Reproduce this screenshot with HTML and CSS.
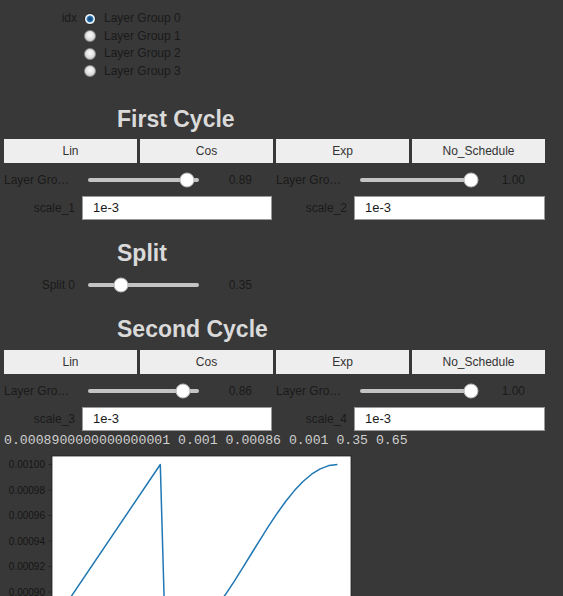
FILE: index.html
```html
<!DOCTYPE html>
<html>
<head>
<meta charset="utf-8">
<link rel="stylesheet" href="styles.css">
</head>
<body>
<div class="page">
  <div class="radio-widget">
    <div class="desc">idx</div>
    <div class="options">
      <div class="opt"><span class="radio checked"></span><span>Layer Group 0</span></div>
      <div class="opt"><span class="radio"></span><span>Layer Group 1</span></div>
      <div class="opt"><span class="radio"></span><span>Layer Group 2</span></div>
      <div class="opt"><span class="radio"></span><span>Layer Group 3</span></div>
    </div>
  </div>

  <h2 class="heading heading-first">First Cycle</h2>
  <div class="buttons">
    <button class="btn">Lin</button>
    <button class="btn">Cos</button>
    <button class="btn">Exp</button>
    <button class="btn">No_Schedule</button>
  </div>
  <div class="cols">
    <div class="slider">
      <div class="label">Layer Group 0</div>
      <div class="track"><span class="thumb" style="left:99px"></span></div>
      <div class="readout">0.89</div>
    </div>
    <div class="slider">
      <div class="label">Layer Group 1</div>
      <div class="track"><span class="thumb" style="left:111px"></span></div>
      <div class="readout">1.00</div>
    </div>
    <div class="textrow">
      <div class="label">scale_1</div>
      <input class="input" type="text" value="1e-3">
    </div>
    <div class="textrow">
      <div class="label">scale_2</div>
      <input class="input" type="text" value="1e-3">
    </div>
  </div>

  <h2 class="heading heading-split">Split</h2>
  <div class="cols">
    <div class="slider slider-split">
      <div class="label">Split 0</div>
      <div class="track"><span class="thumb" style="left:33px"></span></div>
      <div class="readout">0.35</div>
    </div>
  </div>

  <h2 class="heading heading-second">Second Cycle</h2>
  <div class="buttons">
    <button class="btn">Lin</button>
    <button class="btn">Cos</button>
    <button class="btn">Exp</button>
    <button class="btn">No_Schedule</button>
  </div>
  <div class="cols">
    <div class="slider">
      <div class="label">Layer Group 0</div>
      <div class="track"><span class="thumb" style="left:95px"></span></div>
      <div class="readout">0.86</div>
    </div>
    <div class="slider">
      <div class="label">Layer Group 1</div>
      <div class="track"><span class="thumb" style="left:111px"></span></div>
      <div class="readout">1.00</div>
    </div>
    <div class="textrow">
      <div class="label">scale_3</div>
      <input class="input" type="text" value="1e-3">
    </div>
    <div class="textrow">
      <div class="label">scale_4</div>
      <input class="input" type="text" value="1e-3">
    </div>
  </div>

  <pre class="output">0.0008900000000000001 0.001 0.00086 0.001 0.35 0.65</pre>

  <svg class="chart" width="384" height="148" viewBox="0 0 384 148">
    <rect x="48" y="8" width="299" height="196" fill="#ffffff" stroke="#222" stroke-width="0.8"/>
    <g stroke="#222" stroke-width="0.8">
      <line x1="44.5" y1="16.5" x2="48" y2="16.5"/>
      <line x1="44.5" y1="42" x2="48" y2="42"/>
      <line x1="44.5" y1="67.5" x2="48" y2="67.5"/>
      <line x1="44.5" y1="93" x2="48" y2="93"/>
      <line x1="44.5" y1="118.5" x2="48" y2="118.5"/>
      <line x1="44.5" y1="144" x2="48" y2="144"/>
    </g>
    <g class="ticklabels" text-anchor="end" fill="#151515">
      <text x="41" y="20">0.00100</text>
      <text x="41" y="45.5">0.00098</text>
      <text x="41" y="71">0.00096</text>
      <text x="41" y="96.5">0.00094</text>
      <text x="41" y="122">0.00092</text>
      <text x="41" y="147.5">0.00090</text>
    </g>
    <polyline fill="none" stroke="#1f77b4" stroke-width="1.5" stroke-linejoin="round"
      points="61.6,156.75 156.3,16.5 161.4,195 170.0,193.9 178.6,190.6 187.2,185.3 195.8,178.0 204.4,168.9 213.0,158.2 221.6,146.3 230.2,133.3 238.8,119.7 247.4,105.75 256.0,91.8 264.6,78.2 273.2,65.2 281.8,53.3 290.4,42.6 299.0,33.5 307.6,26.2 316.2,20.9 324.8,17.6 333.4,16.5"/>
  </svg>
</div>
</body>
</html>
```

FILE: styles.css
```css
html, body {
  margin: 0;
  padding: 0;
  background: #383838;
}

body {
  font-family: "Liberation Sans", Arial, sans-serif;
  font-size: 12px;
  color: #1a1a1a;
  overflow: hidden;
}

.page {
  width: 541px;
  padding: 0 4px;
}

/* radio group */
.radio-widget {
  display: flex;
  padding-top: 10px;
}

.desc {
  width: 73px;
  text-align: right;
  line-height: 17.5px;
  height: 17.5px;
  margin-right: 7px;
}

.options {
  display: flex;
  flex-direction: column;
}

.opt {
  display: flex;
  align-items: center;
  height: 17.5px;
  line-height: 17.5px;
}

.radio {
  box-sizing: border-box;
  width: 12px;
  height: 12px;
  border-radius: 50%;
  border: 1px solid #8c8c8c;
  background: radial-gradient(circle at 50% 40%, #fbfbfb 0, #e4e4e4 45%, #bdbdbd 100%);
  margin-right: 8px;
}

.radio.checked {
  border-color: #2b2b2b;
  background: radial-gradient(circle, #123f6b 0, #1d5f99 2.2px, #4d93cf 3.2px, #ffffff 3.9px, #e6e6e6 100%);
}

/* headings */
.heading {
  margin: 0 0 6px 0;
  padding-left: 113px;
  font-family: "Liberation Sans", Arial, sans-serif;
  font-weight: bold;
  font-size: 23px;
  line-height: 27px;
  height: 27px;
  color: #dadada;
}

.heading-first {
  margin-top: 25.75px;
}

.heading-split {
  margin-top: 20px;
  margin-bottom: 0;
}

.heading-second {
  margin-top: 17px;
  margin-bottom: 7px;
}

/* buttons */
.buttons {
  display: grid;
  grid-template-columns: repeat(4, 1fr);
  column-gap: 3px;
}

.btn {
  height: 24px;
  border: none;
  background: #eeeeee;
  color: #333333;
  font-family: "Liberation Sans", Arial, sans-serif;
  font-size: 12px;
  padding: 0;
}

/* two column grid */
.cols {
  display: grid;
  grid-template-columns: 268px 269px;
  column-gap: 4px;
  row-gap: 2px;
}

.slider {
  display: flex;
  align-items: center;
  height: 28px;
  margin-top: 3px;
}

.slider-split {
  margin-top: 4px;
}

.label {
  box-sizing: border-box;
  width: 78px;
  flex: none;
  padding-right: 7px;
  text-align: right;
  white-space: nowrap;
  overflow: hidden;
  text-overflow: ellipsis;
  color: #1a1a1a;
}

.track {
  position: relative;
  flex: 1;
  height: 4px;
  margin-left: 6px;
  background: #c4c4c4;
  border-radius: 2px;
}

.thumb {
  position: absolute;
  top: 50%;
  width: 15px;
  height: 15px;
  box-sizing: border-box;
  border-radius: 50%;
  background: #ffffff;
  border: 1px solid #b5b5b5;
  transform: translate(-50%, -50%);
}

.readout {
  width: 53px;
  flex: none;
  margin-right: 20px;
  text-align: right;
  color: #1a1a1a;
}

.textrow {
  display: flex;
  align-items: center;
  height: 24px;
}

.input {
  flex: 1;
  min-width: 0;
  box-sizing: border-box;
  height: 24px;
  margin: 0;
  padding: 0 10px;
  border: 1px solid #9a9a9a;
  background: #ffffff;
  color: #1a1a1a;
  font-family: "Liberation Sans", Arial, sans-serif;
  font-size: 13px;
  outline: none;
}

/* output text */
.output {
  margin: 2.5px 0 0 0;
  font-family: "Liberation Mono", "Courier New", monospace;
  font-size: 13.2px;
  line-height: 15px;
  color: #cfcfcf;
}

.chart {
  display: block;
}

.ticklabels {
  font-family: "Liberation Sans", Arial, sans-serif;
  font-size: 10px;
}
```
